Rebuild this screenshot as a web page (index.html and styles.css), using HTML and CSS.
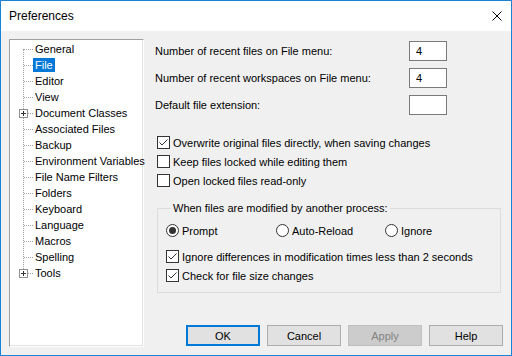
FILE: index.html
```html
<!DOCTYPE html>
<html lang="en">
<head>
  <meta charset="UTF-8">
  <title>Preferences</title>
  <link rel="stylesheet" href="styles.css">
</head>
<body>
  <div class="window">
    <div class="titlebar">
      <span class="title">Preferences</span>
      <svg class="close" width="10" height="10" viewBox="0 0 10 10">
        <path d="M0.5 0.5 L9.5 9.5 M9.5 0.5 L0.5 9.5" stroke="#000" stroke-width="1" fill="none"/>
      </svg>
    </div>

    <div class="content">
      <div class="tree">
        <ul class="nodes">
          <li><span class="lead"></span><span class="label">General</span></li>
          <li><span class="lead"></span><span class="label selected">File</span></li>
          <li><span class="lead"></span><span class="label">Editor</span></li>
          <li><span class="lead"></span><span class="label">View</span></li>
          <li><span class="lead has-children"><span class="plus"></span></span><span class="label">Document Classes</span></li>
          <li><span class="lead"></span><span class="label">Associated Files</span></li>
          <li><span class="lead"></span><span class="label">Backup</span></li>
          <li><span class="lead"></span><span class="label">Environment Variables</span></li>
          <li><span class="lead"></span><span class="label">File Name Filters</span></li>
          <li><span class="lead"></span><span class="label">Folders</span></li>
          <li><span class="lead"></span><span class="label">Keyboard</span></li>
          <li><span class="lead"></span><span class="label">Language</span></li>
          <li><span class="lead"></span><span class="label">Macros</span></li>
          <li><span class="lead"></span><span class="label">Spelling</span></li>
          <li><span class="lead has-children"><span class="plus"></span></span><span class="label">Tools</span></li>
        </ul>
      </div>

      <div class="page">
        <div class="fields">
          <label class="field">Number of recent files on File menu: <input type="text" value="4"></label>
          <label class="field">Number of recent workspaces on File menu: <input type="text" value="4"></label>
          <label class="field">Default file extension: <input type="text" value=""></label>
        </div>

        <div class="checks">
          <div class="check">
            <span class="box"><svg width="11" height="11" viewBox="0 0 11 11"><polyline points="1.5,5.5 4,8 9.5,2.5" fill="none" stroke="#333" stroke-width="1"/></svg></span>
            Overwrite original files directly, when saving changes
          </div>
          <div class="check"><span class="box"></span>Keep files locked while editing them</div>
          <div class="check"><span class="box"></span>Open locked files read-only</div>
        </div>

        <fieldset class="group">
          <legend>When files are modified by another process:</legend>
          <div class="radios">
            <div class="radio-item"><span class="radio on"></span>Prompt</div>
            <div class="radio-item"><span class="radio"></span>Auto-Reload</div>
            <div class="radio-item"><span class="radio"></span>Ignore</div>
          </div>
          <div class="check">
            <span class="box"><svg width="11" height="11" viewBox="0 0 11 11"><polyline points="1.5,5.5 4,8 9.5,2.5" fill="none" stroke="#333" stroke-width="1"/></svg></span>
            Ignore differences in modification times less than 2 seconds
          </div>
          <div class="check">
            <span class="box"><svg width="11" height="11" viewBox="0 0 11 11"><polyline points="1.5,5.5 4,8 9.5,2.5" fill="none" stroke="#333" stroke-width="1"/></svg></span>
            Check for file size changes
          </div>
        </fieldset>

        <div class="buttons">
          <button class="default">OK</button>
          <button>Cancel</button>
          <button disabled>Apply</button>
          <button>Help</button>
        </div>
      </div>
    </div>
  </div>
</body>
</html>
```

FILE: styles.css
```css
* {
  box-sizing: border-box;
}
body {
  margin: 0;
  font-family: "Liberation Sans", Arial, sans-serif;
  font-size: 11px;
  color: #000;
}
.window {
  width: 512px;
  height: 356px;
  border: 1px solid #1883d7;
  background: #f0f0f0;
  display: flex;
  flex-direction: column;
}
.titlebar {
  height: 30px;
  background: #fff;
  display: flex;
  align-items: center;
  justify-content: space-between;
  padding: 0 9px 0 8px;
}
.title {
  font-size: 12px;
}
.close {
  display: block;
}
.content {
  flex: 1;
  display: flex;
  gap: 11px;
  padding: 8px;
}

/* tree */
.tree {
  width: 135px;
  background: #fff;
  border: 1px solid;
  border-color: #a0a0a0 #fff #fff #a0a0a0;
  box-shadow: inset -1px -1px 0 #e3e3e3;
}
.nodes {
  list-style: none;
  margin: 0;
  padding: 1px 0 0 0;
  position: relative;
}
.nodes::before {
  content: "";
  position: absolute;
  left: 13px;
  top: 9px;
  height: 224px;
  border-left: 1px dotted #a0a0a0;
}
.nodes li {
  display: flex;
  align-items: center;
  height: 16px;
  white-space: nowrap;
}
.lead {
  width: 23px;
  height: 16px;
  position: relative;
  flex: none;
}
.lead::after {
  content: "";
  position: absolute;
  left: 14px;
  top: 8px;
  width: 9px;
  border-top: 1px dotted #a0a0a0;
}
.has-children::after {
  left: 18px;
  width: 5px;
}
.plus {
  position: absolute;
  left: 9px;
  top: 4px;
  width: 9px;
  height: 9px;
  border: 1px solid #919191;
  background: #fff;
  z-index: 1;
}
.plus::before,
.plus::after {
  content: "";
  position: absolute;
  background: #333;
}
.plus::before {
  left: 1px;
  top: 3px;
  width: 5px;
  height: 1px;
}
.plus::after {
  left: 3px;
  top: 1px;
  width: 1px;
  height: 5px;
}
.label {
  line-height: 14px;
  padding: 0 2px;
}
.label.selected {
  background: #0078d7;
  color: #fff;
}

/* page */
.page {
  flex: 1;
  display: flex;
  flex-direction: column;
}
.fields {
  margin-top: 2px;
  display: grid;
  row-gap: 7px;
}
.field {
  width: 292px;
  height: 20px;
  display: flex;
  align-items: center;
  justify-content: space-between;
}
.field input {
  width: 38px;
  height: 20px;
  border: 1px solid #7a7a7a;
  background: #fff;
  padding: 0 0 0 6px;
  margin: 0;
  font: inherit;
  outline: none;
}
.checks {
  margin-top: 18px;
  padding-left: 2px;
}
.check {
  height: 19px;
  display: flex;
  align-items: center;
  gap: 3px;
  white-space: nowrap;
}
.box {
  width: 13px;
  height: 13px;
  border: 1px solid #333;
  background: #fff;
  flex: none;
}
.box svg {
  display: block;
}
.group {
  margin: 10px 2px 0 2px;
  padding: 5px 8px 7px 8px;
  border: 1px solid #dcdcdc;
}
.group legend {
  padding: 0 2px;
  margin-left: 5px;
  line-height: 16px;
}
.radios {
  display: grid;
  grid-template-columns: 110px 109px auto;
  height: 19px;
  margin-bottom: 7px;
}
.radio-item {
  display: flex;
  align-items: center;
  gap: 3px;
}
.radio {
  width: 13px;
  height: 13px;
  border: 1px solid #333;
  border-radius: 50%;
  background: #fff;
  position: relative;
  flex: none;
}
.radio.on::after {
  content: "";
  position: absolute;
  left: 2px;
  top: 2px;
  width: 7px;
  height: 7px;
  border-radius: 50%;
  background: #333;
}
.buttons {
  margin-top: auto;
  margin-bottom: 1px;
  display: flex;
  justify-content: flex-end;
  gap: 7px;
}
.buttons button {
  width: 74px;
  height: 21px;
  font: inherit;
  background: #e1e1e1;
  border: 1px solid #adadad;
  color: #000;
  padding: 0;
}
.buttons button.default {
  border: 2px solid #0078d7;
}
.buttons button:disabled {
  background: #cccccc;
  border-color: #bfbfbf;
  color: #838383;
}
```
